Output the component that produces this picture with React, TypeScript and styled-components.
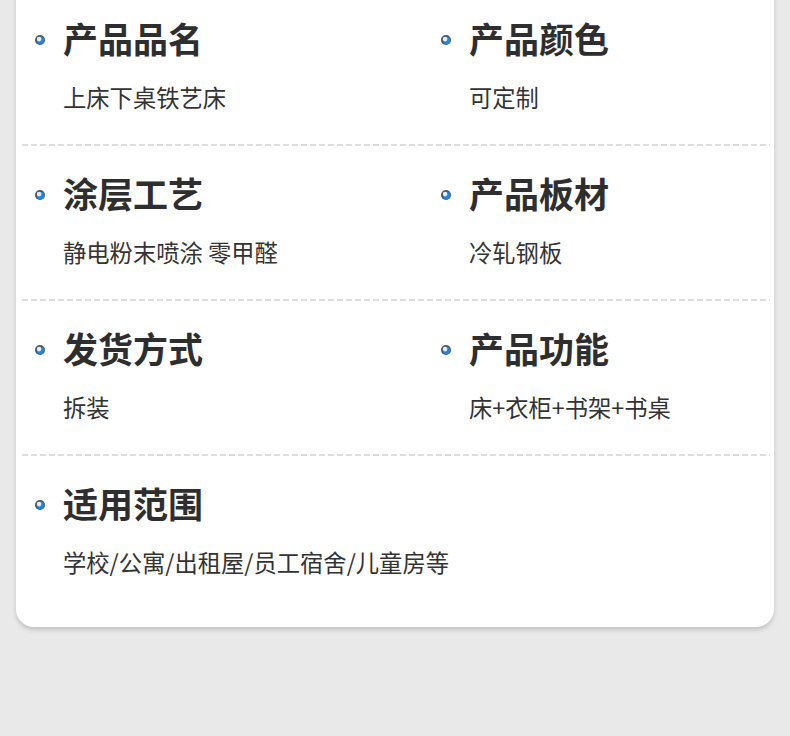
import React from 'react';
import styled, { createGlobalStyle } from 'styled-components';

interface ISpec {
    title: string;
    value: string;
}

const rows: ISpec[][] = [
    [
        { title: '产品品名', value: '上床下桌铁艺床' },
        { title: '产品颜色', value: '可定制' },
    ],
    [
        { title: '涂层工艺', value: '静电粉末喷涂 零甲醛' },
        { title: '产品板材', value: '冷轧钢板' },
    ],
    [
        { title: '发货方式', value: '拆装' },
        { title: '产品功能', value: '床+衣柜+书架+书桌' },
    ],
    [{ title: '适用范围', value: '学校/公寓/出租屋/员工宿舍/儿童房等' }],
];

const Dot = () => (
    <DotSvg viewBox="0 0 10 10">
        <circle cx="5" cy="5" r="5" fill="#50555c" />
        <circle cx="5.6" cy="5.6" r="3.8" fill="#1f86e0" />
        <circle cx="4.1" cy="4.1" r="2.3" fill="#e6ebf0" />
    </DotSvg>
);

const App = () => (
    <>
        <GlobalStyle />
        <Page>
            <Card>
                {rows.map((row, i) => (
                    <React.Fragment key={row[0].title}>
                        <Row>
                            {row.map((item) => (
                                <Cell key={item.title}>
                                    <TitleLine>
                                        <Dot />
                                        <Title>{item.title}</Title>
                                    </TitleLine>
                                    <Value>{item.value}</Value>
                                </Cell>
                            ))}
                        </Row>
                        {i < rows.length - 1 && <Divider />}
                    </React.Fragment>
                ))}
            </Card>
        </Page>
    </>
);

export default App;

const GlobalStyle = createGlobalStyle`
    html, body {
        margin: 0;
        padding: 0;
        background: #e9e9e9;
        font-family: "Noto Sans CJK SC", "Noto Sans", sans-serif;
    }
`;

const Page = styled.div`
    width: 790px;
    height: 736px;
    overflow: hidden;
    padding: 0 16px;
    box-sizing: border-box;
`;

const Card = styled.div`
    margin-top: -9px;
    background: #ffffff;
    border-radius: 0 0 18px 18px;
    box-shadow: 0 3px 4px rgba(0, 0, 0, 0.16);
    padding-bottom: 18px;
`;

const Row = styled.div`
    display: grid;
    grid-template-columns: 406px 1fr;
    padding: 27px 0 32px 19px;
`;

const Cell = styled.div`
    display: flex;
    flex-direction: column;
    white-space: nowrap;
`;

const TitleLine = styled.div`
    display: flex;
    align-items: center;
    gap: 18px;
    height: 40px;
`;

const DotSvg = styled.svg`
    width: 10px;
    height: 10px;
    flex-shrink: 0;
    margin-top: 3px;
`;

const Title = styled.span`
    font-size: 35px;
    font-weight: 700;
    line-height: 40px;
    color: #2e2e2e;
`;

const Value = styled.div`
    margin: 24px 0 0 28px;
    font-size: 23.3px;
    line-height: 30px;
    color: #333333;
`;

const Divider = styled.div`
    height: 2px;
    margin: 0 4px 0 6px;
    background: repeating-linear-gradient(to right, #dedede 0 6px, transparent 6px 9px);
`;
